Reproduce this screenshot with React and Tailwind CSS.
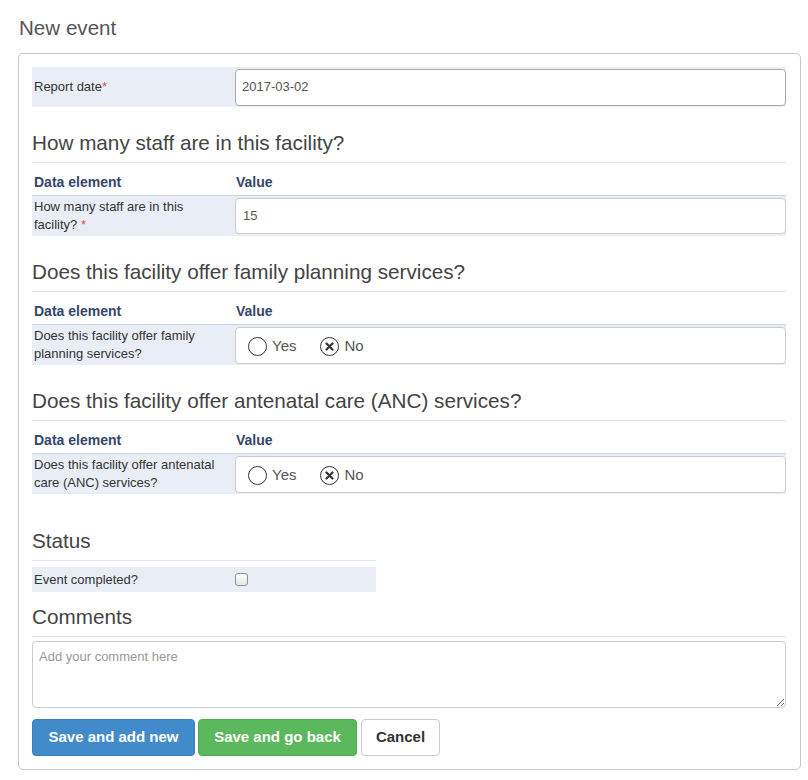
import React from "react";

const Radio = ({ checked, label }) => (
  <span className="flex items-center mr-[24px]">
    <span className="w-[19px] h-[19px] rounded-full border-[1.5px] border-[#333] flex items-center justify-center mr-[5px]">
      {checked && (
        <svg width="9" height="9" viewBox="0 0 9 9">
          <path d="M1.5 1.5 L7.5 7.5 M7.5 1.5 L1.5 7.5" stroke="#333" strokeWidth="2.2" strokeLinecap="round" />
        </svg>
      )}
    </span>
    <span className="text-[15px] text-[#555]">{label}</span>
  </span>
);

const Heading = ({ children }) => (
  <h3 className="text-[20.7px] leading-[22px] text-[#444] pb-[8px] border-b border-[#e3e3e3]">{children}</h3>
);

const Section = ({ title, label, children }) => (
  <div className="mt-[25px]">
    <Heading>{title}</Heading>
    <div className="flex pt-[9px] pb-[3px] border-b border-[#c9d4e4] text-[14px] leading-[20px] font-bold text-[#34466a]">
      <div className="w-[203px] pl-[2px]">Data element</div>
      <div className="pl-[1px]">Value</div>
    </div>
    <div className="flex bg-[#e9eef6] h-[40px] items-center">
      <div className="w-[203px] pl-[2px] pr-2 text-[13px] leading-[18px] text-[#333]">{label}</div>
      {children}
    </div>
  </div>
);

export default function App() {
  return (
    <div className="pl-[18px] pr-[7px] pt-[16px] pb-[10px] font-['Liberation_Sans',Arial,sans-serif] bg-white">
      <h2 className="text-[20.6px] leading-[24px] text-[#555] pl-[1px]">New event</h2>
      <div className="mt-[13px] border border-[#c8c8c8] rounded-[5px] pt-[13px] pb-[13px] pl-[13px] pr-[14px]">
        <div className="flex bg-[#e9eef6] h-[40px] items-center">
          <div className="w-[203px] pl-[2px] text-[13px] text-[#333]">
            Report date<span className="text-[#e05050]">*</span>
          </div>
          <div className="flex-1 h-[37px] border border-[#aaa] rounded-[4px] bg-white flex items-center px-[6px] text-[13px] text-[#555]">
            2017-03-02
          </div>
        </div>

        <Section
          title="How many staff are in this facility?"
          label={<>How many staff are in this facility? <span className="text-[#e05050]">*</span></>}
        >
          <div className="flex-1 h-[36px] border border-[#ccc] rounded-[4px] bg-white flex items-center px-[7px] text-[13px] text-[#555]">
            15
          </div>
        </Section>

        <Section title="Does this facility offer family planning services?" label="Does this facility offer family planning services?">
          <div className="flex-1 h-[37px] border border-[#ccc] rounded-[4px] bg-white flex items-center pl-[12px] pt-[2px]">
            <Radio label="Yes" />
            <Radio checked label="No" />
          </div>
        </Section>

        <Section title="Does this facility offer antenatal care (ANC) services?" label="Does this facility offer antenatal care (ANC) services?">
          <div className="flex-1 h-[37px] border border-[#ccc] rounded-[4px] bg-white flex items-center pl-[12px] pt-[2px]">
            <Radio label="Yes" />
            <Radio checked label="No" />
          </div>
        </Section>

        <div className="w-[344px] mt-[36px]">
          <Heading>Status</Heading>
          <div className="flex items-center bg-[#e9eef6] h-[25px] mt-[6px]">
            <div className="w-[203px] pl-[2px] text-[13px] text-[#333]">Event completed?</div>
            <div className="w-[13px] h-[13px] border border-[#8f8f8f] rounded-[3px] bg-gradient-to-b from-white to-[#e6e6e6]"></div>
          </div>
        </div>

        <div className="mt-[14px]">
          <Heading>Comments</Heading>
          <textarea
            className="block w-full h-[67px] mt-[4px] border border-[#ccc] rounded-[4px] px-[6px] py-[5px] text-[13px] text-[#555] placeholder-[#999] outline-none"
            placeholder="Add your comment here"
          />
        </div>

        <div className="flex mt-[11px]">
          <button className="h-[37px] w-[163px] rounded-[4px] bg-[#428bca] border border-[#3a7fbd] text-white font-bold text-[15px]">Save and add new</button>
          <button className="h-[37px] w-[159px] ml-[3px] rounded-[4px] bg-[#5cb85c] border border-[#52ad52] text-white font-bold text-[15px]">Save and go back</button>
          <button className="h-[37px] w-[79px] ml-[4px] rounded-[4px] bg-white border border-[#ccc] text-[#333] font-bold text-[15px]">Cancel</button>
        </div>
      </div>
    </div>
  );
}
